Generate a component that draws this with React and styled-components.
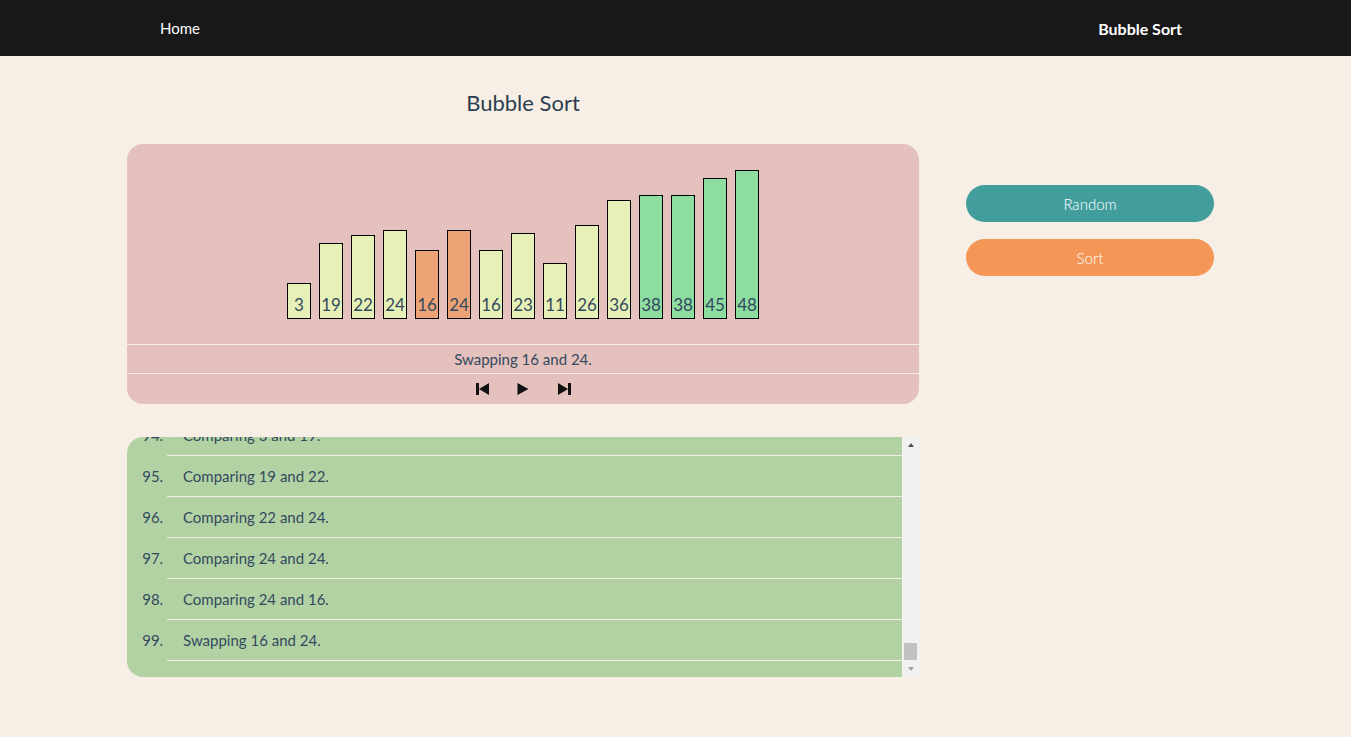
import React, { useLayoutEffect, useRef } from "react";
import styled, { createGlobalStyle } from "styled-components";

const Global = createGlobalStyle`
  html, body { margin: 0; padding: 0; }
  body {
    background: #f7efe5;
    font-family: "Segoe UI", Lato, "Open Sans", sans-serif;
    color: #2c3e50;
  }
`;

const Nav = styled.nav`
  height: 56px;
  background: #181818;
  display: flex;
  align-items: center;
  justify-content: space-between;
  padding: 0 169px 0 160px;
  box-sizing: border-box;
`;

const NavLink = styled.a`
  color: #ffffff;
  font-size: ${(p) => (p.$bold ? "16px" : "15px")};
  text-decoration: none;
  font-weight: ${(p) => (p.$bold ? 700 : 400)};
`;

const Main = styled.main`
  display: flex;
  gap: 47px;
  padding-left: 127px;
  padding-top: 32px;
`;

const LeftCol = styled.div`
  width: 792px;
  display: flex;
  flex-direction: column;
`;

const Title = styled.h1`
  margin: 0 0 26px;
  text-align: center;
  font-size: 22px;
  font-weight: 400;
  line-height: 30px;
  color: #2c3e50;
`;

const Panel = styled.section`
  background: #e4c1bd;
  border-radius: 16px;
  overflow: hidden;
  display: flex;
  flex-direction: column;
`;

const Chart = styled.div`
  height: 200px;
  box-sizing: border-box;
  padding-bottom: 25px;
  display: flex;
  align-items: flex-end;
  justify-content: center;
  gap: 8px;
`;

const Bar = styled.div`
  width: 24px;
  box-sizing: border-box;
  border: 1px solid #000;
  background: ${(p) =>
    p.$state === "swap" ? "#eca477" : p.$state === "done" ? "#8ddca0" : "#e6f1b7"};
  display: flex;
  align-items: flex-end;
  justify-content: center;
  font-size: 17px;
  line-height: 20px;
  padding-bottom: 3px;
  color: #34495e;
`;

const Status = styled.div`
  border-top: 1px solid #f7ede6;
  border-bottom: 1px solid #f7ede6;
  height: 28px;
  display: flex;
  align-items: center;
  justify-content: center;
  font-size: 15px;
  color: #34495e;
`;

const Controls = styled.div`
  height: 30px;
  display: flex;
  align-items: center;
  justify-content: center;
  gap: 27px;
`;

const IconBtn = styled.button`
  border: none;
  background: none;
  padding: 0;
  width: 14px;
  height: 14px;
  display: flex;
  align-items: center;
  justify-content: center;
  cursor: pointer;
`;

const LogBox = styled.div`
  margin-top: 33px;
  height: 240px;
  display: flex;
  background: #b2d2a4;
  border-radius: 16px 0 0 16px;
  overflow: hidden;
`;

const LogScroll = styled.div`
  flex: 1;
  overflow-y: auto;
  scrollbar-width: none;
  &::-webkit-scrollbar { display: none; }
`;

const ScrollTrack = styled.div`
  width: 17px;
  flex: none;
  background: #f1f1f1;
  display: flex;
  flex-direction: column;
`;

const ScrollArrow = styled.div`
  height: 17px;
  flex: none;
  display: flex;
  align-items: center;
  justify-content: center;
  &::before {
    content: "";
    width: 0;
    height: 0;
    border-left: 3.5px solid transparent;
    border-right: 3.5px solid transparent;
    ${(p) =>
      p.$dir === "up"
        ? "border-bottom: 4px solid #505050; margin-top: -1px;"
        : "border-top: 4px solid #a3a3a3; margin-top: 1px;"}
  }
`;

const ScrollSpace = styled.div`
  flex: 1;
`;

const ScrollThumb = styled.div`
  height: 17px;
  margin: 0 2px;
  background: #c1c1c1;
`;

const List = styled.ol`
  margin: 0;
  padding: 0 0 16px 40px;
`;

const Item = styled.li`
  height: 41px;
  box-sizing: border-box;
  border-bottom: 1px solid #eef0e2;
  padding-left: 16px;
  line-height: 40px;
  font-size: 15px;
  color: #34495e;
  &::marker { color: #34495e; }
`;

const RightCol = styled.div`
  width: 248px;
  padding-top: 97px;
  display: flex;
  flex-direction: column;
  gap: 17px;
`;

const Button = styled.button`
  height: 37px;
  border: none;
  border-radius: 19px;
  background: ${(p) => p.$bg};
  color: #ffffff;
  font-family: inherit;
  font-size: 15px;
  font-weight: 300;
  cursor: pointer;
`;

const data = [3, 19, 22, 24, 16, 24, 16, 23, 11, 26, 36, 38, 38, 45, 48];
const stateOf = (i) => (i === 4 || i === 5 ? "swap" : i >= 11 ? "done" : "idle");

function buildLog() {
  const log = [];
  const a = [37, 8, 44, 21, 5, 30, 12, 48, 27, 33, 16, 41, 19, 45, 2];
  for (let n = 0; n < 93; n++) {
    const x = a[n % 15];
    const y = a[(n + 1) % 15];
    log.push(n % 3 === 2 ? `Swapping ${y} and ${x}.` : `Comparing ${x} and ${y}.`);
  }
  log.push("Comparing 3 and 19.");
  log.push("Comparing 19 and 22.");
  log.push("Comparing 22 and 24.");
  log.push("Comparing 24 and 24.");
  log.push("Comparing 24 and 16.");
  log.push("Swapping 16 and 24.");
  return log;
}
const logLines = buildLog();

const SkipBack = () => (
  <svg width="13" height="12" viewBox="0 0 13 12">
    <rect x="0" y="0" width="3" height="12" fill="#111" />
    <path d="M13 0 L3 6 L13 12 Z" fill="#111" />
  </svg>
);
const Play = () => (
  <svg width="12" height="12" viewBox="0 0 12 12">
    <path d="M0.5 0 L11.5 6 L0.5 12 Z" fill="#111" />
  </svg>
);
const SkipFwd = () => (
  <svg width="13" height="12" viewBox="0 0 13 12">
    <path d="M0 0 L10 6 L0 12 Z" fill="#111" />
    <rect x="10" y="0" width="3" height="12" fill="#111" />
  </svg>
);

export default function App() {
  const logRef = useRef(null);
  useLayoutEffect(() => {
    if (logRef.current) logRef.current.scrollTop = logRef.current.scrollHeight;
  }, []);
  return (
    <>
      <Global />
      <Nav>
        <NavLink href="#">Home</NavLink>
        <NavLink href="#" $bold>
          Bubble Sort
        </NavLink>
      </Nav>
      <Main>
        <LeftCol>
          <Title>Bubble Sort</Title>
          <Panel>
            <Chart>
              {data.map((v, i) => (
                <Bar
                  key={i}
                  $state={stateOf(i)}
                  style={{ height: `${Math.round(28.5 + 2.51 * v)}px` }}
                >
                  {v}
                </Bar>
              ))}
            </Chart>
            <Status>Swapping 16 and 24.</Status>
            <Controls>
              <IconBtn aria-label="Previous">
                <SkipBack />
              </IconBtn>
              <IconBtn aria-label="Play">
                <Play />
              </IconBtn>
              <IconBtn aria-label="Next">
                <SkipFwd />
              </IconBtn>
            </Controls>
          </Panel>
          <LogBox>
            <LogScroll ref={logRef}>
              <List>
                {logLines.map((l, i) => (
                  <Item key={i}>{l}</Item>
                ))}
              </List>
            </LogScroll>
            <ScrollTrack aria-hidden="true">
              <ScrollArrow $dir="up" />
              <ScrollSpace />
              <ScrollThumb />
              <ScrollArrow $dir="down" />
            </ScrollTrack>
          </LogBox>
        </LeftCol>
        <RightCol>
          <Button $bg="#429e9d">Random</Button>
          <Button $bg="#f39656">Sort</Button>
        </RightCol>
      </Main>
    </>
  );
}
